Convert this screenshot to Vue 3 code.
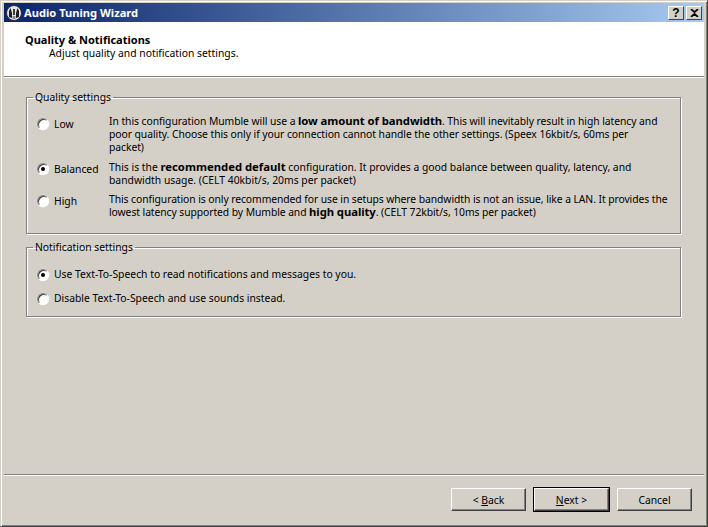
<script setup>
const quality = [
  { label: 'Low', checked: false, parts: [['In this configuration Mumble will use a '], ['low amount of bandwidth', 1], ['. This will inevitably result in high latency and poor quality. Choose this only if your connection cannot handle the other settings. (Speex 16kbit/s, 60ms per packet)']] },
  { label: 'Balanced', checked: true, parts: [['This is the '], ['recommended default', 1], [' configuration. It provides a good balance between quality, latency, and bandwidth usage. (CELT 40kbit/s, 20ms per packet)']] },
  { label: 'High', checked: false, parts: [['This configuration is only recommended for use in setups where bandwidth is not an issue, like a LAN. It provides the lowest latency supported by Mumble and '], ['high quality', 1], ['. (CELT 72kbit/s, 10ms per packet)']] },
]
const notes = [
  { label: 'Use Text-To-Speech to read notifications and messages to you.', checked: true },
  { label: 'Disable Text-To-Speech and use sounds instead.', checked: false },
]
</script>

<template>
  <div class="window">
    <div class="titlebar">
      <svg class="logo" width="16" height="16" viewBox="0 0 16 16">
        <circle cx="8" cy="8" r="7.500" fill="#e4e4e4" stroke="#2a2a3a" />
        <path d="M3 12V6l1.500-3L6 8v5zM13 12V6l-1.500-3L10 8v5z" fill="#1c1c28" />
        <path d="M7 4h2v6H7z" fill="#3a3a48" />
        <path d="M6.500 11h3v3h-3z" fill="#8a8a94" />
      </svg>
      <span class="title">Audio Tuning Wizard</span>
      <div class="caption-btns">
        <span class="cap"><b>?</b></span>
        <span class="cap"><svg width="9" height="8" viewBox="0 0 9 8"><path d="M1 0l3.500 3.200L8 0M1 8l3.500-3.200L8 8" fill="none" stroke="#000" stroke-width="1.700" /></svg></span>
      </div>
    </div>
    <header class="head">
      <div class="head-title">Quality &amp; Notifications</div>
      <div class="head-sub">Adjust quality and notification settings.</div>
    </header>
    <main class="body">
      <fieldset class="group q">
        <legend>Quality settings</legend>
        <div v-for="item in quality" :key="item.label" class="q-row" :class="item.label.toLowerCase()">
          <label class="radio-l">
            <span class="radio" :class="{ on: item.checked }"></span>
            <span>{{ item.label }}</span>
          </label>
          <p class="desc"><template v-for="(p, i) in item.parts" :key="i"><b v-if="p[1]">{{ p[0] }}</b><template v-else>{{ p[0] }}</template></template></p>
        </div>
      </fieldset>
      <fieldset class="group n">
        <legend>Notification settings</legend>
        <label v-for="item in notes" :key="item.label" class="radio-l n-row">
          <span class="radio" :class="{ on: item.checked }"></span>
          <span>{{ item.label }}</span>
        </label>
      </fieldset>
    </main>
    <footer class="foot">
      <button class="btn back">&lt; <u>B</u>ack</button>
      <button class="btn next"><u>N</u>ext &gt;</button>
      <button class="btn cancel">Cancel</button>
    </footer>
  </div>
</template>

<style>
html, body { margin: 0; background: #d4d0c8; }
</style>

<style scoped>
.window {
  width: 708px;
  height: 527px;
  box-sizing: border-box;
  background: #d4d0c8;
  border: 1px solid #d4d0c8;
  border-right-color: #404040;
  border-bottom-color: #404040;
  box-shadow: inset 1px 1px 0 #fff, inset -1px -1px 0 #808080;
  padding: 2px 3px 2px 3px;
  display: flex;
  flex-direction: column;
  font: 10.350px/13px "Noto Sans", "DejaVu Sans", sans-serif;
  color: #000;
  overflow: hidden;
}
.titlebar {
  height: 19px;
  flex: none;
  display: flex;
  align-items: center;
  background: linear-gradient(90deg, #0a246a, #a6caf0);
  color: #fff;
  padding: 0 2px 0 2px;
}
.logo { flex: none; margin-right: 2px; }
.title { font-weight: 700; font-size: 11.150px; }
.caption-btns { margin-left: auto; display: flex; gap: 2px; }
.cap {
  width: 16px;
  height: 14px;
  box-sizing: border-box;
  background: #d4d0c8;
  border: 1px solid;
  border-color: #fff #404040 #404040 #fff;
  display: flex;
  align-items: center;
  justify-content: center;
  font: 700 12px/12px "Liberation Sans", sans-serif;
  color: #000;
}
.head {
  height: 54px;
  flex: none;
  background: #fff;
  box-sizing: border-box;
  padding: 11px 0 0 21px;
}
.head-title { font-weight: 700; font-size: 11px; }
.head-sub { padding: 1px 0 0 24px; }
.body {
  flex: 1;
  border-top: 1px solid #808080;
  box-shadow: inset 0 1px 0 #fff;
  padding: 14px 23px 0 22px;
  display: flex;
  flex-direction: column;
  gap: 7px;
}
.group {
  margin: 0;
  padding: 0;
  min-width: 0;
  border: 1px solid #808080;
  box-shadow: 1px 1px 0 #fff, inset 1px 1px 0 #fff;
}
.group legend { margin-left: -4px; padding: 0 2px; line-height: 13px; }
.q { height: 143px; box-sizing: border-box; padding: 11px 0 0 10px; }
.n { height: 76px; box-sizing: border-box; padding: 14px 10px 0 10px; }
.q-row { display: flex; margin-bottom: 7px; }
.q-row.balanced { margin-bottom: 6px; }
.radio-l { display: flex; align-items: center; gap: 5px; }
.q-row .radio-l { width: 72px; flex: none; height: 16px; align-self: flex-start; }
.q-row.low .radio-l { height: 18px; }
.desc { margin: 0; flex: 1; line-height: 13px; }
.low .desc { padding-right: 18px; letter-spacing: -0.060px; }
.balanced .desc { padding-right: 10px; }
.high .desc { padding-right: 6px; letter-spacing: -0.075px; }
.desc b { font-size: 11.300px; line-height: 0; }
.n-row { height: 13px; margin-bottom: 11px; }
.radio {
  width: 12px;
  height: 12px;
  flex: none;
  box-sizing: border-box;
  border-radius: 50%;
  background: #fff;
  border: 1px solid;
  border-color: #808080 #fff #fff #808080;
  box-shadow: inset 1px 1px 0 #404040, 0 0 0 0.500px #e8e6e0;
  display: flex;
  align-items: center;
  justify-content: center;
}
.radio.on::after {
  content: "";
  width: 4px;
  height: 4px;
  border-radius: 50%;
  background: #000;
}
.foot {
  flex: none;
  height: 50px;
  box-sizing: border-box;
  border-top: 1px solid #808080;
  box-shadow: inset 0 1px 0 #fff;
  display: flex;
  justify-content: flex-end;
  align-items: flex-start;
  padding: 13px 12px 0 0;
  gap: 8px;
}
.btn {
  width: 75px;
  height: 23px;
  padding: 1px 0 0;
  margin: 0;
  font: inherit;
  color: #000;
  background: #d4d0c8;
  border: 1px solid;
  border-color: #fff #404040 #404040 #fff;
  box-shadow: inset -1px -1px 0 #808080;
}
.next {
  outline: 1px solid #000;
  outline-offset: 0;
}
</style>
